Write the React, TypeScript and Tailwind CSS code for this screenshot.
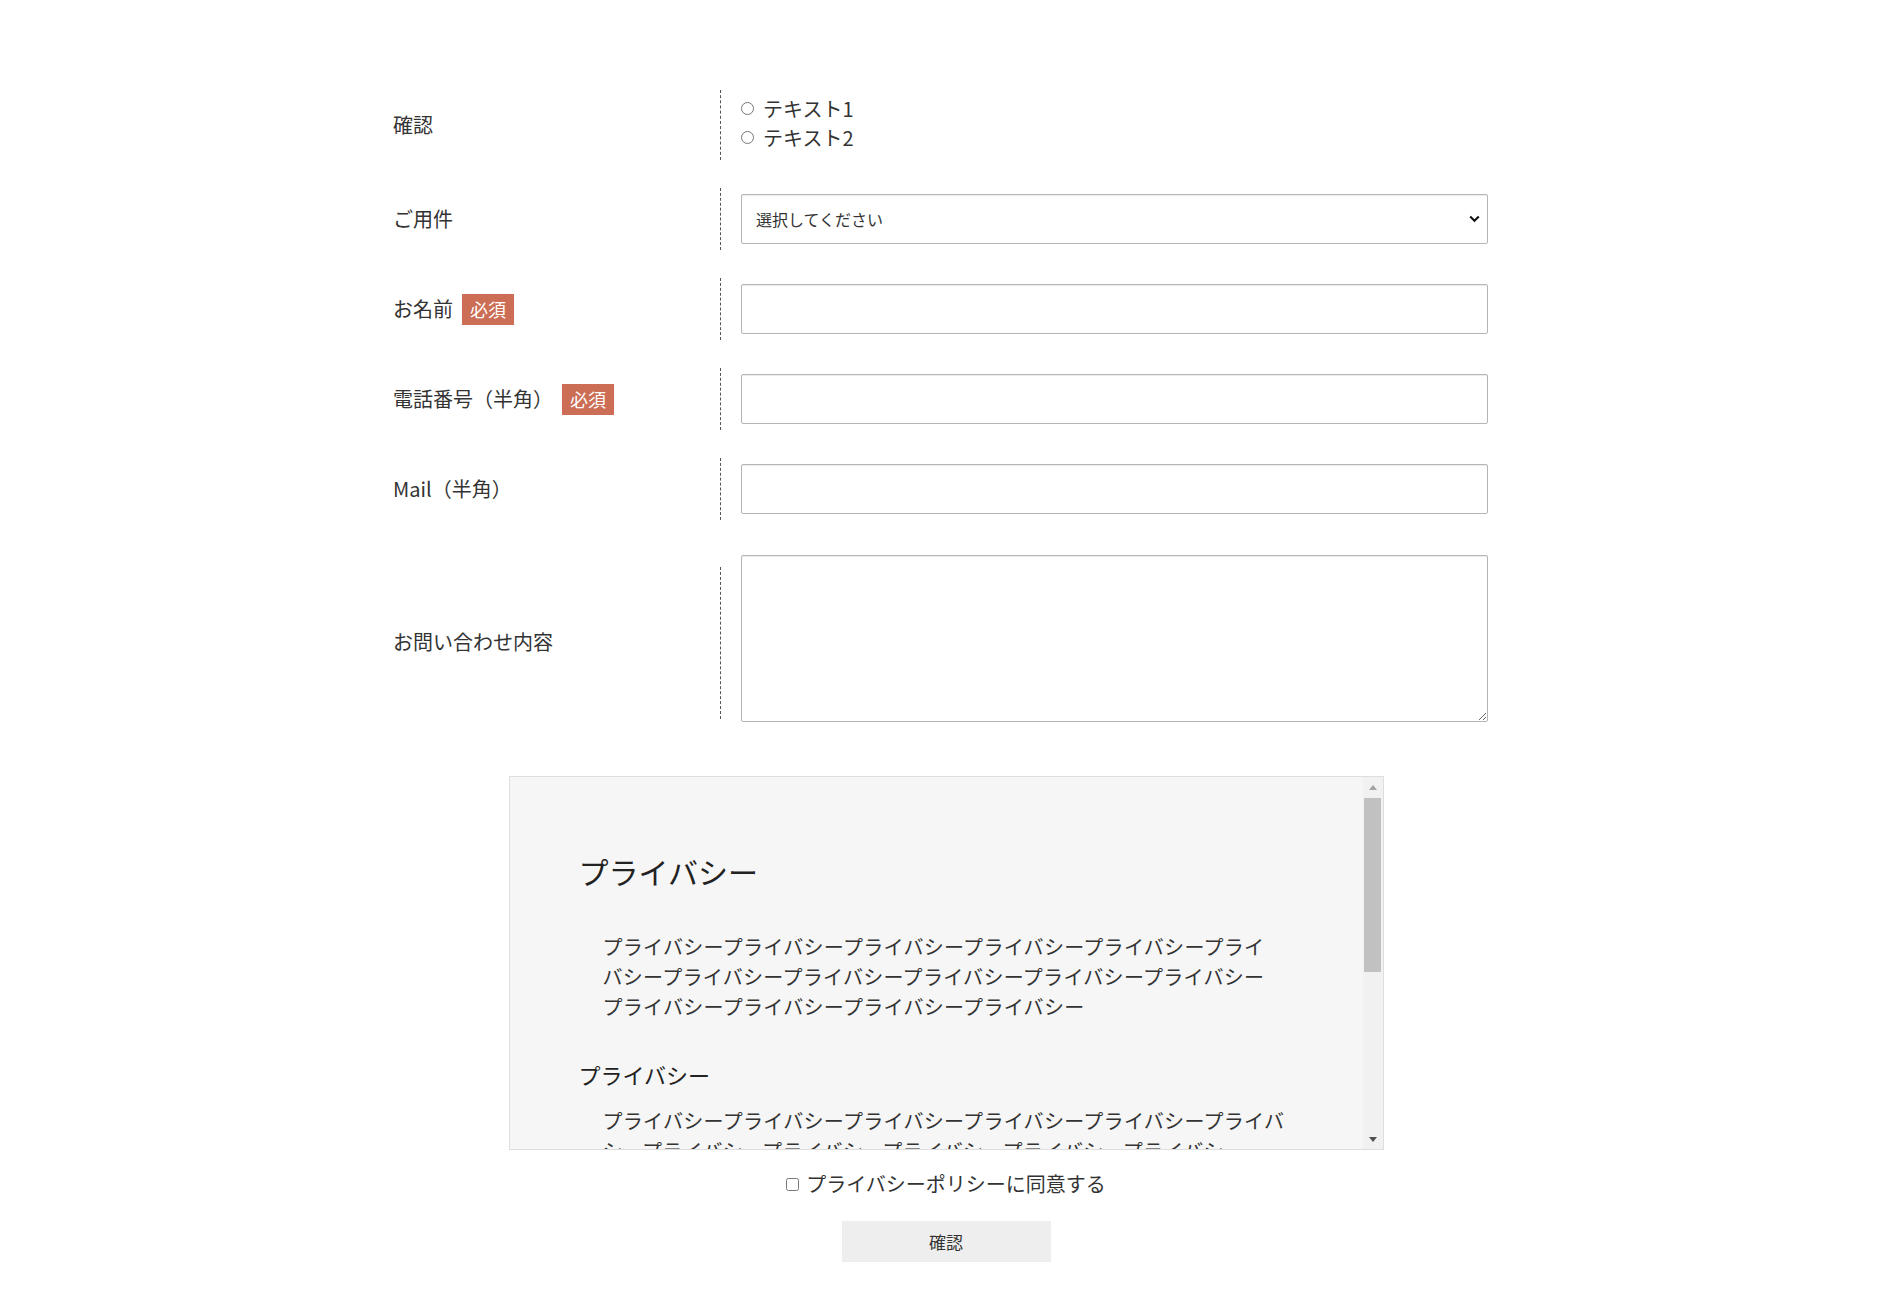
import React from 'react';

const font = { fontFamily: '"Noto Sans CJK JP", "Noto Sans", sans-serif' };

const Required = () => (
  <span className="ml-[9px] inline-block bg-[#cc6d55] px-[8px] text-[18px] leading-[31px] text-white">必須</span>
);

interface RowProps {
  label: React.ReactNode;
  children: React.ReactNode;
  last?: boolean;
  first?: boolean;
}

const Row: React.FC<RowProps> = ({ label, children, last, first }) => (
  <div className={`flex ${last ? '' : 'mb-[28px]'}`}>
    <div
      className={`flex w-[344px] shrink-0 items-center pl-[17px] text-[20px] text-[#333] ${last ? 'pt-[14px]' : ''}`}
    >
      {label}
    </div>
    <div className={`w-0 border-l border-dashed border-[#555] ${last ? 'mt-[19px] mb-[3px]' : ''}`} />
    <div className={`pl-[20px] ${last ? 'pt-[7px]' : first ? 'pt-[4px] pb-[8px]' : 'py-[6px]'}`}>{children}</div>
  </div>
);

const inputClass =
  'block h-[50px] w-[747px] rounded-[2px] border border-[#b5b5b5] bg-white px-[14px] text-[16px] text-[#333] shadow-[inset_0_1px_1px_rgba(0,0,0,0.08)] outline-none';

const App: React.FC = () => {
  return (
    <div className="min-h-[1293px] bg-white pt-[90px] text-[#333]" style={font}>
      <div className="mx-auto w-[1140px]">
        <Row label="確認" first>
          <label className="flex items-center text-[20px] leading-[29px]">
            <input type="radio" name="confirm" className="m-0 mr-[9px] h-[13px] w-[13px]" />
            テキスト1
          </label>
          <label className="flex items-center text-[20px] leading-[29px]">
            <input type="radio" name="confirm" className="m-0 mr-[9px] h-[13px] w-[13px]" />
            テキスト2
          </label>
        </Row>

        <Row label="ご用件">
          <div className="relative w-[747px]">
            <select className={`${inputClass} appearance-none`} defaultValue="">
              <option value="">選択してください</option>
            </select>
            <svg
              className="pointer-events-none absolute right-[8px] top-[21px]"
              width="11"
              height="8"
              viewBox="0 0 11 8"
            >
              <path d="M1.2 1.5 L5.5 5.8 L9.8 1.5" fill="none" stroke="#111" strokeWidth="2" />
            </svg>
          </div>
        </Row>

        <Row
          label={
            <>
              お名前
              <Required />
            </>
          }
        >
          <input type="text" className={inputClass} />
        </Row>

        <Row
          label={
            <>
              電話番号（半角）
              <Required />
            </>
          }
        >
          <input type="tel" className={inputClass} />
        </Row>

        <Row label="Mail（半角）">
          <input type="email" className={inputClass} />
        </Row>

        <Row label="お問い合わせ内容" last>
          <textarea className="block h-[167px] w-[747px] rounded-[2px] border border-[#b5b5b5] bg-white p-[10px] text-[16px] shadow-[inset_0_1px_1px_rgba(0,0,0,0.08)] outline-none" />
        </Row>
      </div>

      {/* privacy policy box */}
      <div className="mx-auto mt-[54px] flex h-[374px] w-[875px] border border-[#dedede] bg-[#f6f6f6]">
        <div className="flex-1 overflow-hidden pl-[69px] pt-[72px] text-[#222]">
          <h2 className="text-[30px] leading-[45px]">プライバシー</h2>
          <p className="ml-[24px] mt-[38px] w-[670px] text-[20px] leading-[30px] tracking-[0.3px] text-[#333]">
            プライバシープライバシープライバシープライバシープライバシープライバシープライバシープライバシープライバシープライバシープライバシープライバシープライバシープライバシープライバシー
          </p>
          <h3 className="mt-[36px] text-[22px] leading-[33px]">プライバシー</h3>
          <p className="ml-[24px] mt-[15px] w-[690px] text-[20px] leading-[30px] tracking-[0.3px] text-[#333]">
            プライバシープライバシープライバシープライバシープライバシープライバシープライバシープライバシープライバシープライバシープライバシー
          </p>
        </div>
        {/* scrollbar */}
        <div className="flex w-[20px] shrink-0 flex-col items-center bg-[#f1f1f1]">
          <div className="flex h-[20px] w-full items-center justify-center">
            <svg width="8" height="5" viewBox="0 0 8 5">
              <path d="M0 5 L4 0 L8 5 Z" fill="#a3a3a3" />
            </svg>
          </div>
          <div className="mt-[1px] h-[174px] w-[17px] bg-[#c1c1c1]" />
          <div className="flex-1" />
          <div className="flex h-[20px] w-full items-center justify-center">
            <svg width="8" height="5" viewBox="0 0 8 5">
              <path d="M0 0 L8 0 L4 5 Z" fill="#505050" />
            </svg>
          </div>
        </div>
      </div>

      <label className="mt-[19px] flex items-center justify-center text-[20px] leading-[30px]">
        <input type="checkbox" className="m-0 mr-[7px] h-[13px] w-[13px]" />
        プライバシーポリシーに同意する
      </label>

      <div className="mt-[22px] flex justify-center">
        <button type="button" className="h-[41px] w-[209px] bg-[#eeeeee] text-[17px] text-[#333]">
          確認
        </button>
      </div>
    </div>
  );
};

export default App;
